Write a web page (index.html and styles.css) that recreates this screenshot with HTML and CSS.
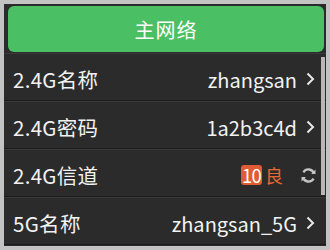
FILE: index.html
```html
<!DOCTYPE html>
<html>
<head>
<meta charset="utf-8">
<link rel="stylesheet" href="styles.css">
</head>
<body>
<div class="panel">
  <div class="main-btn">主网络</div>
  <div class="list">
    <div class="row">
      <span class="label">2.4G名称</span>
      <span class="value">zhangsan</span>
      <svg class="chev" width="9" height="14" viewBox="0 0 9 14"><path d="M1.5 1.5 L7 7 L1.5 12.5" fill="none" stroke="#e8e8e8" stroke-width="2"/></svg>
    </div>
    <div class="row">
      <span class="label">2.4G密码</span>
      <span class="value">1a2b3c4d</span>
      <svg class="chev" width="9" height="14" viewBox="0 0 9 14"><path d="M1.5 1.5 L7 7 L1.5 12.5" fill="none" stroke="#e8e8e8" stroke-width="2"/></svg>
    </div>
    <div class="row">
      <span class="label">2.4G信道</span>
      <span class="badge">10</span>
      <span class="quality">良</span>
      <svg class="refresh" width="17" height="17" viewBox="0 0 16 16">
        <path d="M13.2 6.2 A5.5 5.5 0 0 0 3.2 5" fill="none" stroke="#c4c4c4" stroke-width="2.2"/>
        <path d="M10.5 6.6 L14.6 6.6 L14.6 2.4 Z" fill="#c4c4c4"/>
        <path d="M2.8 9.8 A5.5 5.5 0 0 0 12.8 11" fill="none" stroke="#c4c4c4" stroke-width="2.2"/>
        <path d="M5.5 9.4 L1.4 9.4 L1.4 13.6 Z" fill="#c4c4c4"/>
      </svg>
    </div>
    <div class="row">
      <span class="label">5G名称</span>
      <span class="value">zhangsan_5G</span>
      <svg class="chev" width="9" height="14" viewBox="0 0 9 14"><path d="M1.5 1.5 L7 7 L1.5 12.5" fill="none" stroke="#e8e8e8" stroke-width="2"/></svg>
    </div>
  </div>
  <div class="scroll-thumb"></div>
</div>
</body>
</html>
```
FILE: styles.css
```css
html, body {
  margin: 0;
  padding: 0;
  background: #c3c3c3;
}
body {
  width: 330px;
  height: 250px;
  overflow: hidden;
  font-family: "Noto Sans CJK SC", "Noto Sans", sans-serif;
}
.panel {
  position: relative;
  margin: 4px 4px 0 4px;
  width: 322px;
  height: 242px;
  background: #2b2b2b;
  box-sizing: border-box;
  padding: 2px 2px 0 4px;
  overflow: hidden;
}
.main-btn {
  height: 46px;
  background: #4bbf63;
  border-radius: 6px;
  color: #ffffff;
  font-size: 20px;
  display: flex;
  align-items: center;
  justify-content: center;
  letter-spacing: 1px;
}
.list {
  margin-top: 1px;
  margin-left: -4px;
  margin-right: -2px;
}
.row {
  height: 48px;
  display: flex;
  align-items: center;
  padding: 4px 11px 0 9px;
  box-sizing: border-box;
  border-top: 1px solid #3a3a3a;
  border-bottom: 1px solid #1b1b1b;
  color: #f2f2f2;
  font-size: 20.5px;
}
.label {
  flex: 1;
  letter-spacing: 0.3px;
}
.value {
  margin-right: 9px;
  font-size: 20px;
}
.chev {
  display: block;
}
.badge {
  background: #e05c34;
  color: #fff;
  border-radius: 3px;
  width: 21px;
  height: 20px;
  font-size: 18.5px;
  display: flex;
  align-items: center;
  justify-content: center;
  letter-spacing: -0.8px;
}
.quality {
  color: #e8692f;
  font-size: 18px;
  margin-left: 3px;
  margin-right: 17px;
}
.refresh {
  display: block;
  margin-right: -2px;
}
.scroll-thumb {
  position: absolute;
  right: 1px;
  top: 53px;
  width: 4px;
  height: 138px;
  background: #b7b7b7;
}
```
